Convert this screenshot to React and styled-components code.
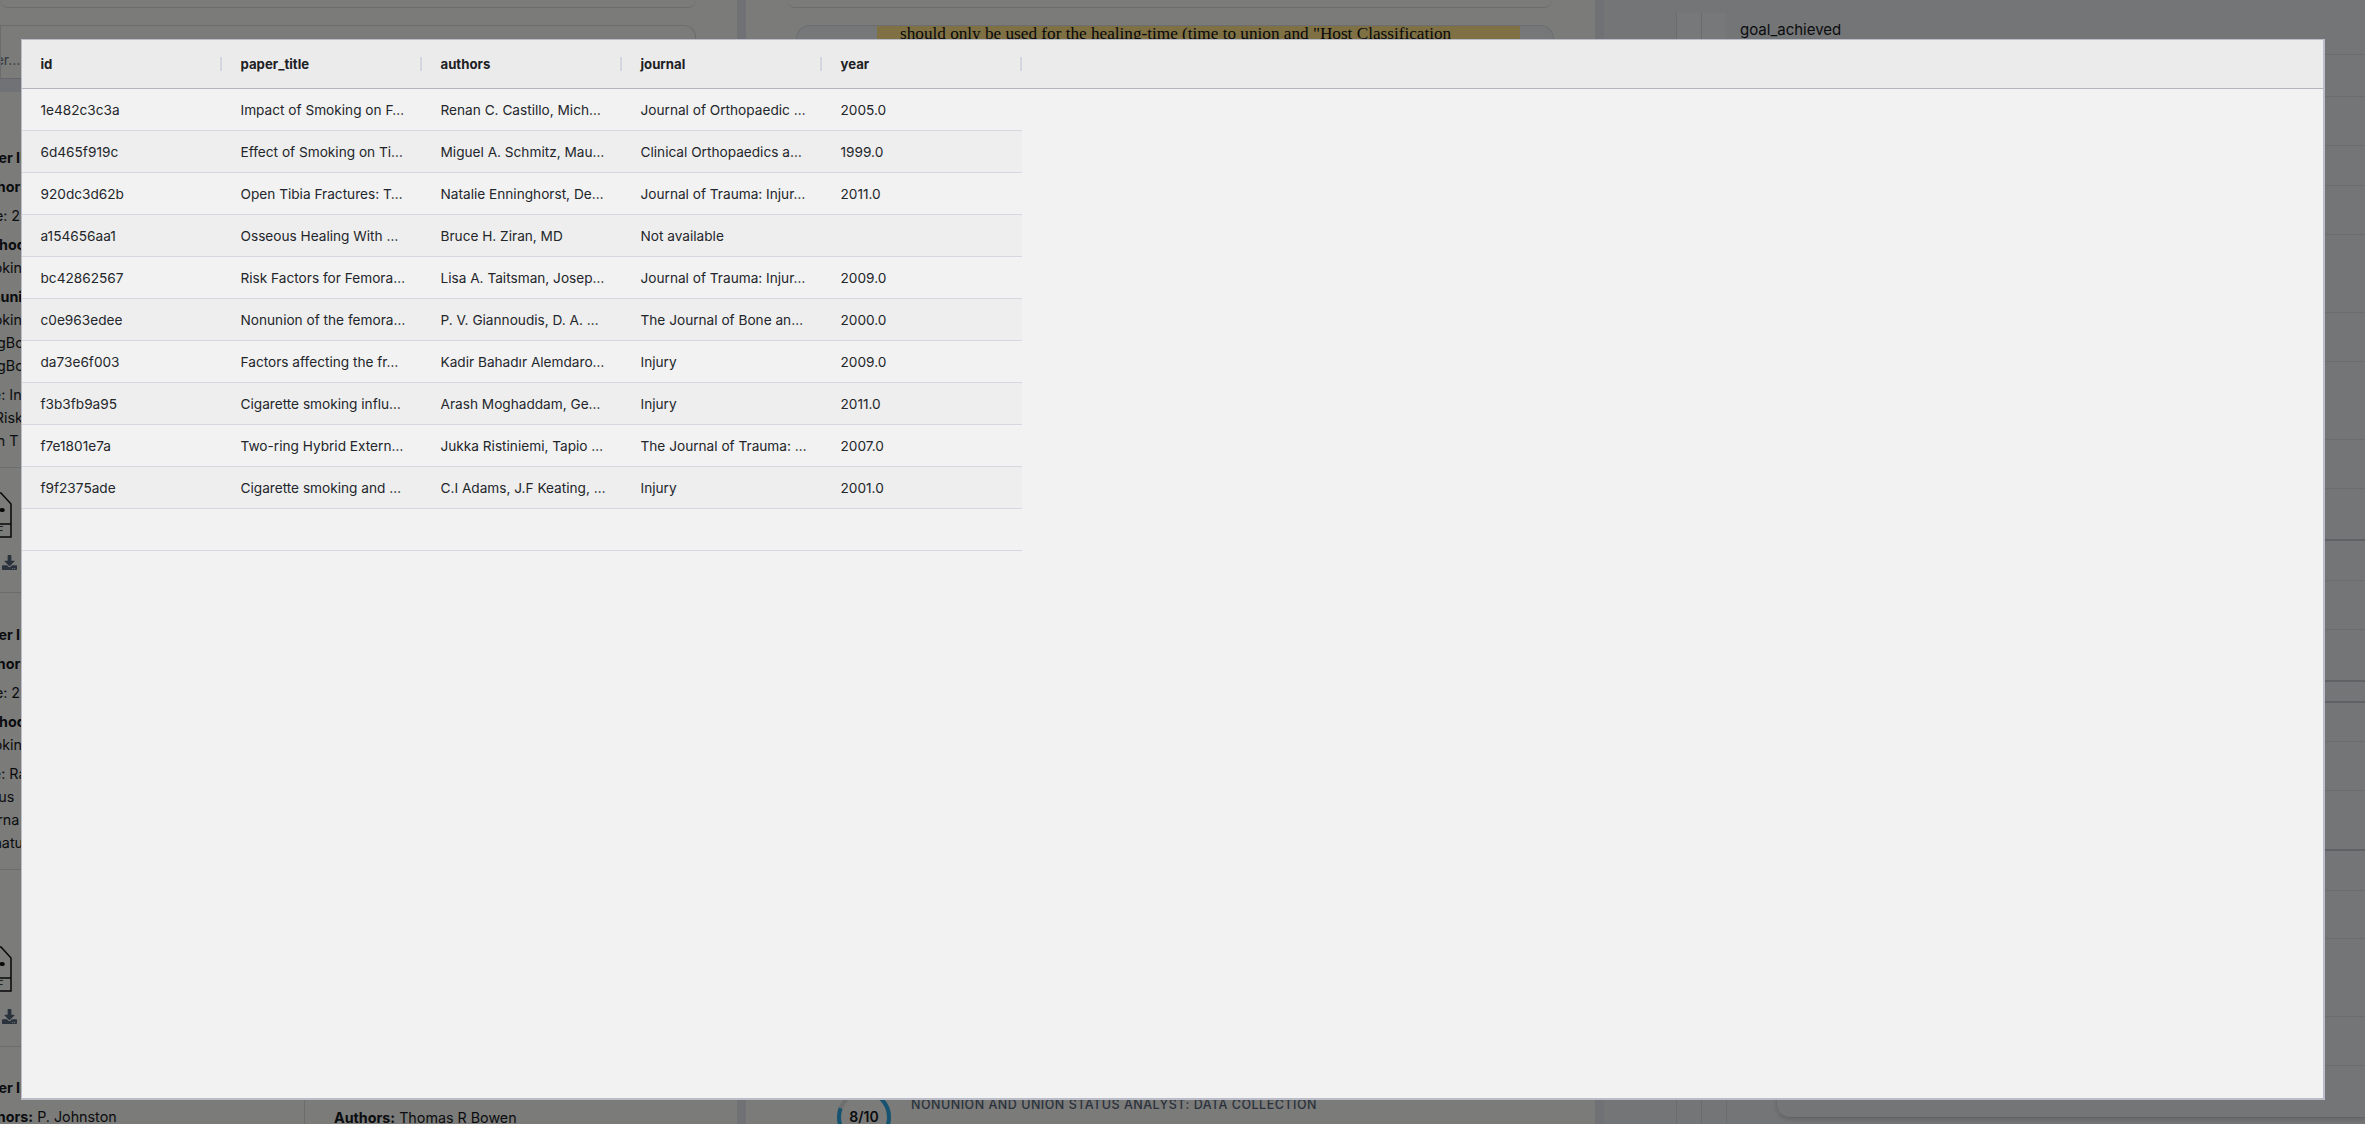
import styled, { createGlobalStyle } from 'styled-components';
import { FaDownload } from 'react-icons/fa';

const columns = ['id', 'paper_title', 'authors', 'journal', 'year'];

const papers = [
  ['1e482c3c3a', 'Impact of Smoking on F…', 'Renan C. Castillo, Mich…', 'Journal of Orthopaedic …', '2005.0'],
  ['6d465f919c', 'Effect of Smoking on Ti…', 'Miguel A. Schmitz, Mau…', 'Clinical Orthopaedics a…', '1999.0'],
  ['920dc3d62b', 'Open Tibia Fractures: T…', 'Natalie Enninghorst, De…', 'Journal of Trauma: Injur…', '2011.0'],
  ['a154656aa1', 'Osseous Healing With …', 'Bruce H. Ziran, MD', 'Not available', ''],
  ['bc42862567', 'Risk Factors for Femora…', 'Lisa A. Taitsman, Josep…', 'Journal of Trauma: Injur…', '2009.0'],
  ['c0e963edee', 'Nonunion of the femora…', 'P. V. Giannoudis, D. A. …', 'The Journal of Bone an…', '2000.0'],
  ['da73e6f003', 'Factors affecting the fr…', 'Kadir Bahadır Alemdaro…', 'Injury', '2009.0'],
  ['f3b3fb9a95', 'Cigarette smoking influ…', 'Arash Moghaddam, Ge…', 'Injury', '2011.0'],
  ['f7e1801e7a', 'Two-ring Hybrid Extern…', 'Jukka Ristiniemi, Tapio …', 'The Journal of Trauma: …', '2007.0'],
  ['f9f2375ade', 'Cigarette smoking and …', 'C.I Adams, J.F Keating, …', 'Injury', '2001.0'],
  ['', '', '', '', ''],
];

const firstPaper = {
  top: 11,
  fields: ['Paper ID', 'Authors:', 'Date: 2'],
  method: 'Method',
  sections: [
    ['Smoking'],
    ['Nonunion', 'Smoking', 'LongBone', 'LongBone'],
  ],
  title: ['Title: In', 'for Risk', 'Even T'],
  footer: 126,
};

const secondPaper = {
  top: 11,
  fields: ['Paper ID', 'Authors:', 'Date: 2'],
  method: 'Method',
  sections: [['Smoking']],
  title: ['Title: Ra', 'Bonus', 'Interna', 'Signatu'],
  footer: 178,
};

const GlobalStyle = createGlobalStyle`
  html, body {
    margin: 0;
    height: 100%;
    overflow: hidden;
    font-family: Inter, "Liberation Sans", sans-serif;
  }
`;

const Page = styled.div`
  display: flex;
  width: 2365px;
  height: 1124px;
  overflow: hidden;
  background: #f6f6f2;
  color: #15181d;
`;

const Gutter = styled.div`
  flex: 0 0 9px;
  background: #dfe2e8;
`;

const LeftColumn = styled.div`
  flex: 0 0 737px;
  overflow: hidden;
`;

const StubCard = styled.div`
  height: 7px;
  width: ${(p) => p.$width}px;
  margin-left: ${(p) => p.$left || 0}px;
  border-bottom: 1px solid #d5d8dd;
  border-radius: 0 0 12px 12px;
`;

const SearchCard = styled.div`
  box-sizing: border-box;
  width: 696px;
  height: 54px;
  margin-top: 17px;
  padding: 24px 0 0 0;
  border: 1px solid #d5d8dd;
  border-bottom-color: #c9ccd4;
  border-radius: 0 12px 0 0;
  font-size: 14px;
  line-height: 20px;
  color: #6b7280;
  overflow: hidden;
`;

const SearchText = styled.div`
  margin-left: -25px;
`;

const Band = styled.div`
  width: 696px;
  height: 13px;
  background: #e3e5ea;
`;

const PaperGrid = styled.div`
  display: grid;
  grid-template-columns: 305px 350px;
  column-gap: 12px;
  width: 696px;
`;

const PaperList = styled.div`
  display: flex;
  flex-direction: column;
  gap: 13px;
  padding-top: 37px;
  border-right: 1px solid #d5d8dd;
`;

const SideList = styled.div`
  padding: 1008px 0 0 17px;
`;

const Card = styled.div`
  padding-top: ${(p) => p.$top}px;
`;

const Line = styled.div`
  margin-left: -28px;
  white-space: nowrap;
  font-size: 14.3px;
  line-height: 23px;
  font-weight: ${(p) => (p.$bold ? 700 : 400)};
  margin-top: ${(p) => (p.$spaced ? 6 : 0)}px;

  b {
    font-weight: 700;
  }
`;

const SideLine = styled(Line)`
  margin-left: 0;
`;

const CardFooter = styled.div`
  box-sizing: border-box;
  display: flex;
  flex-direction: column;
  justify-content: flex-end;
  gap: 17px;
  height: ${(p) => p.$height}px;
  margin-top: 15px;
  padding-bottom: 21px;
  border-top: 1px solid #d5d8dd;
  border-bottom: 1px solid #d5d8dd;
`;

const PdfIcon = styled.svg`
  display: block;
  margin-left: -24px;
`;

const DownloadLink = styled.span`
  display: block;
  height: 16px;
  margin-left: 2px;
  color: #55647a;
  font-size: 15px;
  line-height: 16px;
`;

const MiddleColumn = styled.div`
  flex: 0 0 849px;
  display: flex;
  flex-direction: column;
  overflow: hidden;
`;

const ExcerptCard = styled.div`
  flex: 1;
  margin: 17px 41px 0 50px;
  padding-left: 80px;
  border: 1px solid #d8dbe0;
  border-bottom: 0;
  border-radius: 14px 14px 0 0;
  background: #eceef1;
`;

const Highlight = styled.div`
  width: 643px;
  padding-left: 23px;
  box-sizing: border-box;
  background: #ffe389;
  font-family: "Liberation Serif", serif;
  font-size: 17.2px;
  line-height: 16px;
  color: #111;
  white-space: nowrap;
`;

const ScoreRow = styled.div`
  display: flex;
  align-items: flex-start;
  gap: 20px;
  height: 34px;
  margin-left: 91px;
`;

const ScoreRing = styled.div`
  position: relative;
  flex: 0 0 54px;
  height: 52px;
  display: flex;
  align-items: center;
  justify-content: center;
  font-size: 14px;
  font-weight: 600;
  color: #15181d;
`;

const RingArt = styled.svg`
  position: absolute;
  inset: 0;
`;

const ScoreTitle = styled.div`
  font-size: 12.5px;
  font-weight: 500;
  letter-spacing: 0.5px;
  line-height: 16px;
  margin-top: 7px;
  color: #56657a;
  white-space: nowrap;
`;

const RightColumn = styled.div`
  flex: 1;
  display: flex;
  flex-direction: column;
  padding-top: 13px;
  background: #e9ebed;
  overflow: hidden;
`;

const GoalRow = styled.div`
  display: flex;
  flex: 0 0 41px;
  padding-left: 72px;
`;

const Guide = styled.div`
  flex: 0 0 25px;
  box-sizing: border-box;
  border-left: 1px solid #d3d6db;
  background: ${(p) => (p.$tint ? '#eef0f3' : 'transparent')};
`;

const GoalLabel = styled.div`
  margin-left: 14px;
  font-size: 15px;
  line-height: 34px;
`;

const TreeBody = styled.div`
  flex: 1;
  display: flex;
  padding-left: 72px;
`;

const RowsCard = styled.div`
  flex: 1;
  margin: 0 0 7px 25px;
  border-left: 1px solid #d3d6db;
  border-bottom: 1px solid #c4c7cc;
  border-radius: 0 0 0 14px;
  box-shadow: 0 2px 4px rgba(0, 0, 0, 0.12);
  display: flex;
  flex-direction: column;
`;

const TreeRow = styled.div`
  box-sizing: border-box;
  height: ${(p) => p.$height}px;
  border-top: ${(p) => (p.$strong ? '2px solid #c0c3c8' : '1px solid #d6d9dd')};
`;

const Backdrop = styled.div`
  position: fixed;
  inset: 0;
  background: rgba(0, 0, 0, 0.5);
`;

const Modal = styled.div`
  position: fixed;
  left: 21px;
  top: 39px;
  box-sizing: border-box;
  width: 2304px;
  height: 1061px;
  border: 1px solid #babdc7;
  border-right-width: 2px;
  border-bottom-width: 2px;
  background: #f2f2f2;
  color: #23262b;
  overflow: hidden;
`;

const GridHeader = styled.div`
  display: flex;
  align-items: center;
  height: 49px;
  box-sizing: border-box;
  background: #ebebeb;
  border-bottom: 1px solid #b3b5bd;
`;

const HeaderCell = styled.div`
  position: relative;
  box-sizing: border-box;
  width: 200px;
  padding: 0 18.5px;
  font-size: 13.2px;
  font-weight: 700;
  color: #1d2024;

  &::after {
    content: '';
    position: absolute;
    right: 0;
    top: 50%;
    width: 2px;
    height: 14px;
    margin-top: -7px;
    background: #d3d6df;
  }
`;

const GridRow = styled.div`
  display: flex;
  width: 1000px;
  height: 42px;
  box-sizing: border-box;
  border-bottom: 1.5px solid #d5d8e1;
  background: ${(p) => (p.$alt ? '#eeeeee' : '#f2f2f2')};
`;

const Cell = styled.div`
  box-sizing: border-box;
  width: 200px;
  padding: 0 0 0 18.5px;
  font-size: 13.65px;
  line-height: 43px;
  white-space: nowrap;
  overflow: hidden;
`;

const PaperCard = ({ paper }) => (
  <Card $top={paper.top}>
    {paper.fields.map((text) => (
      <Line key={text} $bold={text !== 'Date: 2'} $spaced>
        {text}
      </Line>
    ))}
    <Line $bold $spaced>
      {paper.method}
    </Line>
    {paper.sections[0].map((text) => (
      <Line key={text}>{text}</Line>
    ))}
    {paper.sections[1] && (
      <>
        <Line $bold $spaced>
          {paper.sections[1][0]}
        </Line>
        {paper.sections[1].slice(1).map((text, i) => (
          <Line key={i}>{text}</Line>
        ))}
      </>
    )}
    {paper.title.map((text, i) => (
      <Line key={text} $spaced={i === 0}>
        {text}
      </Line>
    ))}
    <CardFooter $height={paper.footer}>
      <PdfIcon width="36" height="46" viewBox="0 0 36 46" fill="none" stroke="#111" strokeWidth="1.5">
        <path d="M1 1h24l10 11v33H1z" />
        <path d="M1 32h34" />
        <ellipse cx="26" cy="18" rx="2" ry="1.3" fill="#111" />
        <text x="18" y="42" fontSize="10" fill="#111" stroke="none" textAnchor="middle" fontFamily="Inter">
          PDF
        </text>
      </PdfIcon>
      <DownloadLink>
        <FaDownload />
      </DownloadLink>
    </CardFooter>
  </Card>
);

const App = () => {
  const rowHeights = [42, 49, 40, 49, 78, 49, 78, 49, 51, 41, 49, 51, 21, 40, 49, 59, 41, 48, 78, 49, 52];
  const strongRows = [9, 12, 13, 16];

  return (
    <>
      <GlobalStyle />
      <Page>
        <LeftColumn>
          <StubCard $width={696} />
          <SearchCard>
            <SearchText>Filter…</SearchText>
          </SearchCard>
          <Band />
          <PaperGrid>
            <PaperList>
              <PaperCard paper={firstPaper} />
              <PaperCard paper={secondPaper} />
              <Card $top={10}>
                <Line $bold $spaced>
                  Paper ID
                </Line>
                <Line $spaced>
                  <b>Authors:</b> P. Johnston
                </Line>
              </Card>
            </PaperList>
            <SideList>
              <SideLine $spaced>
                <b>Authors:</b> Thomas R Bowen
              </SideLine>
            </SideList>
          </PaperGrid>
        </LeftColumn>
        <Gutter />
        <MiddleColumn>
          <StubCard $width={765} $left={41} />
          <ExcerptCard>
            <Highlight>should only be used for the healing-time (time to union and "Host Classification</Highlight>
          </ExcerptCard>
          <ScoreRow>
            <ScoreRing>
              <RingArt width="54" height="54" viewBox="0 0 54 54" fill="none">
                <circle cx="27" cy="27" r="25" stroke="#d9dce0" strokeWidth="4" />
                <circle cx="27" cy="27" r="25" stroke="#2aa6e0" strokeWidth="4" strokeDasharray="126 157" transform="rotate(-90 27 27)" />
              </RingArt>
              8/10
            </ScoreRing>
            <ScoreTitle>NONUNION AND UNION STATUS ANALYST: DATA COLLECTION</ScoreTitle>
          </ScoreRow>
        </MiddleColumn>
        <Gutter />
        <RightColumn>
          <GoalRow>
            <Guide $tint />
            <Guide $tint />
            <GoalLabel>goal_achieved</GoalLabel>
          </GoalRow>
          <TreeBody>
            <Guide />
            <Guide />
            <Guide />
            <RowsCard>
              {rowHeights.map((height, i) => (
                <TreeRow key={i} $height={height} $strong={strongRows.includes(i)} />
              ))}
            </RowsCard>
          </TreeBody>
        </RightColumn>
      </Page>
      <Backdrop />
      <Modal>
        <GridHeader>
          {columns.map((name) => (
            <HeaderCell key={name}>{name}</HeaderCell>
          ))}
        </GridHeader>
        {papers.map((row, i) => (
          <GridRow key={i} $alt={i % 2 === 1 && i < 10}>
            {row.map((value, j) => (
              <Cell key={j}>{value}</Cell>
            ))}
          </GridRow>
        ))}
      </Modal>
    </>
  );
};

export default App;
